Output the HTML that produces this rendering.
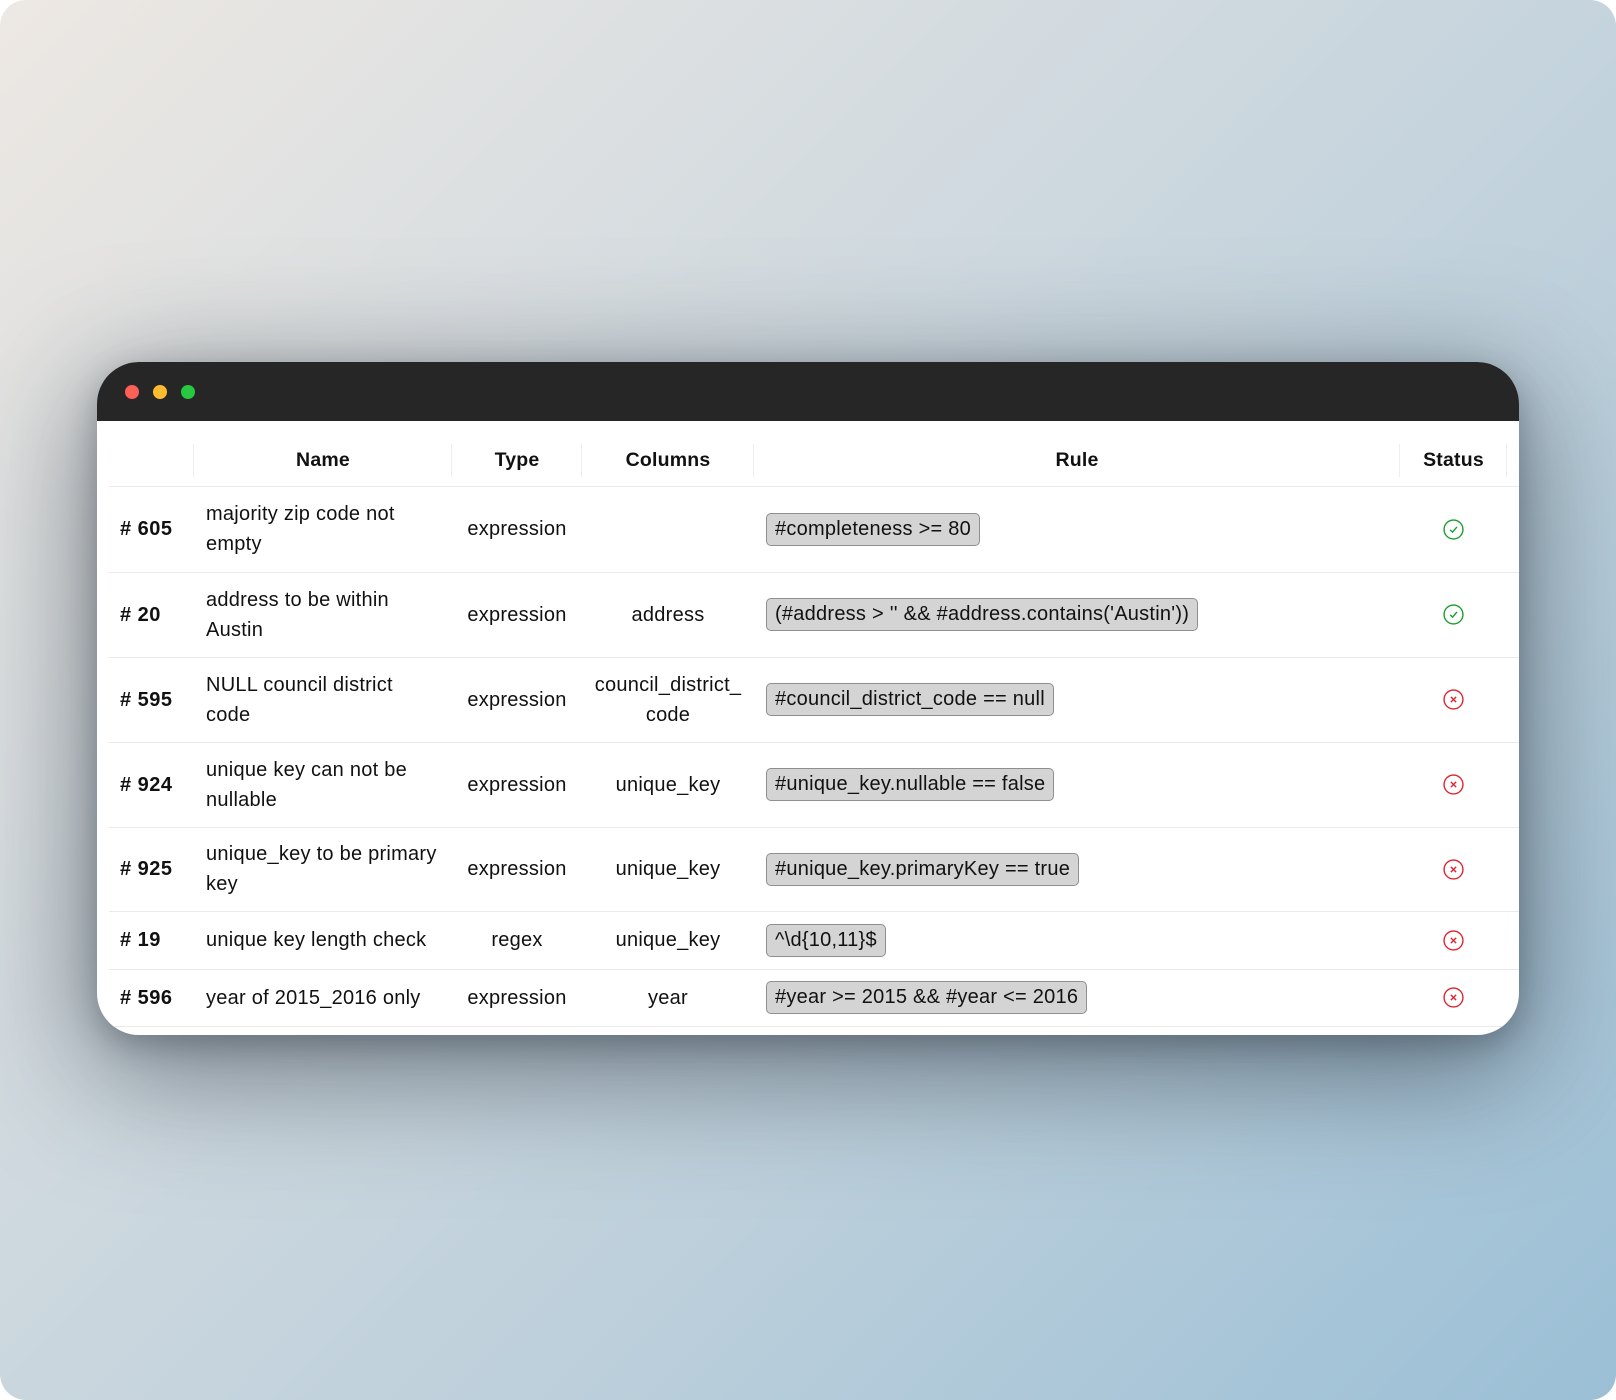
<!DOCTYPE html>
<html><head><meta charset="utf-8"><style>
*{box-sizing:border-box;margin:0;padding:0}
html,body{width:1616px;height:1400px;background:#fff;overflow:hidden}
.bg{position:absolute;left:0;top:0;width:1616px;height:1400px;border-radius:26px;
background:linear-gradient(135deg,#ede8e3 0%,#d3dbe0 35%,#bccfdb 65%,#9bbfd6 100%);}
.win{position:absolute;left:97px;top:362px;width:1422px;height:673px;border-radius:42px;background:#fff;overflow:hidden;
box-shadow:0 30px 120px 10px rgba(40,50,60,.55),0 10px 30px rgba(40,50,60,.3)}
.bar{height:59px;background:#262626;position:relative}
.dot{position:absolute;top:23px;width:14px;height:14px;border-radius:50%}
table{position:absolute;left:12px;top:59px;width:1410px;border-collapse:collapse;font-family:"Liberation Sans",sans-serif;font-size:20px;letter-spacing:0.25px;color:#111}
th{font-weight:bold;height:65px;padding-top:14px;text-align:center;position:relative;border-bottom:1px solid #ececec;font-size:19.5px;letter-spacing:0.2px}
th.s::after{content:"";position:absolute;right:0;top:23px;height:33px;border-right:1px solid #eee}
td{border-bottom:1px solid #eaeaea;line-height:30px;vertical-align:middle}
.id{font-weight:bold;padding-left:11px;letter-spacing:0.5px}
.c{text-align:center}
.pill{display:inline-block;background:#d4d4d4;border:1px solid #8f8f8f;border-radius:5px;padding:0 8px;height:33px;line-height:31px;white-space:nowrap}
svg{display:block;margin:0 auto}
</style></head><body>
<div class="bg"></div>
<div class="win">
<div class="bar"><div class="dot" style="left:28px;background:#fe5f57"></div><div class="dot" style="left:56px;background:#febc2e"></div><div class="dot" style="left:84px;background:#28c840"></div></div>
<table>
<colgroup><col style="width:85px"><col style="width:258px"><col style="width:130px"><col style="width:172px"><col style="width:646px"><col style="width:107px"><col></colgroup>
<tr><th class="s"></th><th class="s">Name</th><th class="s">Type</th><th class="s">Columns</th><th class="s">Rule</th><th class="s">Status</th><th></th></tr>
<tr style="height:86px"><td class="id"># 605</td><td style="padding-left:12px">majority zip code not<br>empty</td><td class="c">expression</td><td class="c"></td><td style="padding-left:12px"><span class="pill">#completeness &gt;= 80</span></td><td><svg width="21" height="21" viewBox="0 0 20 20"><circle cx="10" cy="10" r="9" fill="none" stroke="#1a9b2a" stroke-width="1.3"/><path d="M6.8 10.3l2.3 2.2L13.3 7.6" fill="none" stroke="#1a9b2a" stroke-width="1.3"/></svg></td><td></td></tr>
<tr style="height:85px"><td class="id"># 20</td><td style="padding-left:12px">address to be within<br>Austin</td><td class="c">expression</td><td class="c">address</td><td style="padding-left:12px"><span class="pill">(#address &gt; '' &amp;&amp; #address.contains('Austin'))</span></td><td><svg width="21" height="21" viewBox="0 0 20 20"><circle cx="10" cy="10" r="9" fill="none" stroke="#1a9b2a" stroke-width="1.3"/><path d="M6.8 10.3l2.3 2.2L13.3 7.6" fill="none" stroke="#1a9b2a" stroke-width="1.3"/></svg></td><td></td></tr>
<tr style="height:85px"><td class="id"># 595</td><td style="padding-left:12px">NULL council district<br>code</td><td class="c">expression</td><td class="c">council_district_<br>code</td><td style="padding-left:12px"><span class="pill">#council_district_code == null</span></td><td><svg width="21" height="21" viewBox="0 0 20 20"><circle cx="10" cy="10" r="9" fill="none" stroke="#e0202a" stroke-width="1.3"/><path d="M7.5 7.5l5 5M12.5 7.5l-5 5" stroke="#e0202a" stroke-width="1.3"/></svg></td><td></td></tr>
<tr style="height:85px"><td class="id"># 924</td><td style="padding-left:12px">unique key can not be<br>nullable</td><td class="c">expression</td><td class="c">unique_key</td><td style="padding-left:12px"><span class="pill">#unique_key.nullable == false</span></td><td><svg width="21" height="21" viewBox="0 0 20 20"><circle cx="10" cy="10" r="9" fill="none" stroke="#e0202a" stroke-width="1.3"/><path d="M7.5 7.5l5 5M12.5 7.5l-5 5" stroke="#e0202a" stroke-width="1.3"/></svg></td><td></td></tr>
<tr style="height:84px"><td class="id"># 925</td><td style="padding-left:12px">unique_key to be primary<br>key</td><td class="c">expression</td><td class="c">unique_key</td><td style="padding-left:12px"><span class="pill">#unique_key.primaryKey == true</span></td><td><svg width="21" height="21" viewBox="0 0 20 20"><circle cx="10" cy="10" r="9" fill="none" stroke="#e0202a" stroke-width="1.3"/><path d="M7.5 7.5l5 5M12.5 7.5l-5 5" stroke="#e0202a" stroke-width="1.3"/></svg></td><td></td></tr>
<tr style="height:58px"><td class="id"># 19</td><td style="padding-left:12px">unique key length check</td><td class="c">regex</td><td class="c">unique_key</td><td style="padding-left:12px"><span class="pill">^\d{10,11}$</span></td><td><svg width="21" height="21" viewBox="0 0 20 20"><circle cx="10" cy="10" r="9" fill="none" stroke="#e0202a" stroke-width="1.3"/><path d="M7.5 7.5l5 5M12.5 7.5l-5 5" stroke="#e0202a" stroke-width="1.3"/></svg></td><td></td></tr>
<tr style="height:57px"><td class="id"># 596</td><td style="padding-left:12px">year of 2015_2016 only</td><td class="c">expression</td><td class="c">year</td><td style="padding-left:12px"><span class="pill">#year &gt;= 2015 &amp;&amp; #year &lt;= 2016</span></td><td><svg width="21" height="21" viewBox="0 0 20 20"><circle cx="10" cy="10" r="9" fill="none" stroke="#e0202a" stroke-width="1.3"/><path d="M7.5 7.5l5 5M12.5 7.5l-5 5" stroke="#e0202a" stroke-width="1.3"/></svg></td><td></td></tr>
</table>
</div>
</body></html>
